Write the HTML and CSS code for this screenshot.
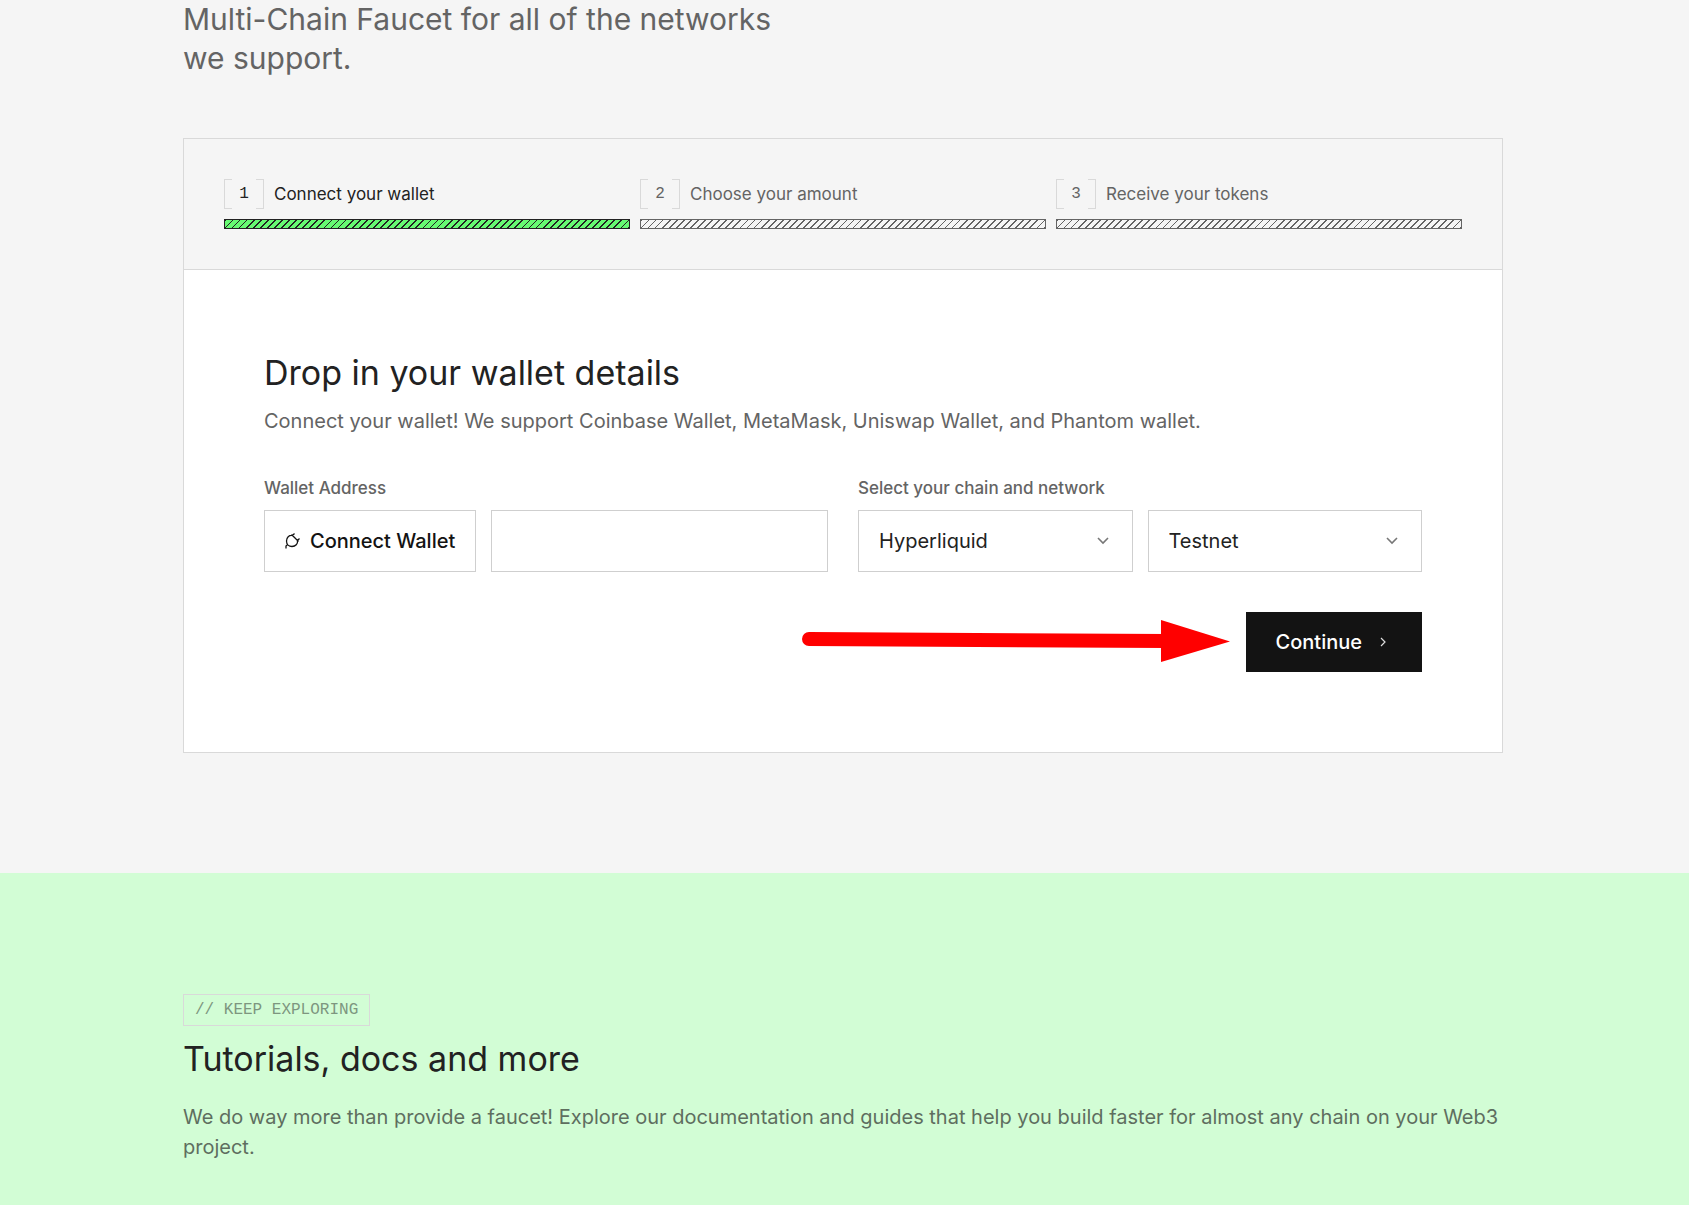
FILE: index.html
```html
<!DOCTYPE html>
<html lang="en">
<head>
<meta charset="utf-8">
<meta name="viewport" content="width=device-width, initial-scale=1">
<title>Multi-Chain Faucet</title>
<link rel="stylesheet" href="styles.css">
</head>
<body>
<main class="faucet">
  <div class="container">
    <p class="intro">Multi-Chain Faucet for all of the networks we support.</p>
    <section class="card">
      <ol class="steps">
        <li class="step step-active">
          <div class="step-head"><span class="step-number">1</span><span>Connect your wallet</span></div>
          <div class="step-bar"></div>
        </li>
        <li class="step">
          <div class="step-head"><span class="step-number">2</span><span>Choose your amount</span></div>
          <div class="step-bar"></div>
        </li>
        <li class="step">
          <div class="step-head"><span class="step-number">3</span><span>Receive your tokens</span></div>
          <div class="step-bar"></div>
        </li>
      </ol>
      <form class="form">
        <h2 class="title">Drop in your wallet details</h2>
        <p class="lead">Connect your wallet! We support Coinbase Wallet, MetaMask, Uniswap Wallet, and Phantom wallet.</p>
        <div class="fields">
          <div class="field">
            <label class="label" for="address">Wallet Address</label>
            <div class="field-row">
              <button class="connect" type="button">
                <svg class="plug" viewBox="0 0 16 16" aria-hidden="true"><path d="M7.500 1.500L14.500 8.500M8.500 2.500C5 2 2.500 4.500 2.500 8C2.500 11.500 5 13.500 8 13.500C11.500 13.500 14 11 13.500 7.500M8.500 2.500L10.500 .5M13.500 7.500L15.500 5.500M3.500 11.500L2 13V15.500"/></svg>
                Connect Wallet
              </button>
              <input class="control address" id="address" type="text">
            </div>
          </div>
          <div class="field">
            <label class="label" for="chain">Select your chain and network</label>
            <div class="field-row">
              <div class="picker">
                <select class="control" id="chain"><option>Hyperliquid</option></select>
                <svg class="chevron" viewBox="0 0 12 8" aria-hidden="true"><path d="M1 1l5 5 5-5"/></svg>
              </div>
              <div class="picker">
                <select class="control" aria-label="Network"><option>Testnet</option></select>
                <svg class="chevron" viewBox="0 0 12 8" aria-hidden="true"><path d="M1 1l5 5 5-5"/></svg>
              </div>
            </div>
          </div>
        </div>
        <div class="actions">
          <svg class="pointer" viewBox="0 0 428 42" aria-hidden="true"><path class="shaft" d="M7 19L365 21"/><path class="head" d="M359 0L428 21.500L359 42Z"/></svg>
          <button class="continue" type="button">Continue
            <svg class="next" viewBox="0 0 6 10" aria-hidden="true"><path d="M1 1l4 4-4 4"/></svg>
          </button>
        </div>
      </form>
    </section>
  </div>
</main>
<section class="explore">
  <div class="container">
    <p class="badge">// KEEP EXPLORING</p>
    <h2 class="title">Tutorials, docs and more</h2>
    <p class="lead">We do way more than provide a faucet! Explore our documentation and guides that help you build faster for almost any chain on your Web3 project.</p>
  </div>
</section>
</body>
</html>
```
FILE: styles.css
```css
* { box-sizing: border-box; }

body {
  display: flex;
  flex-direction: column;
  min-height: 100vh;
  margin: 0;
  background: #f5f5f5;
  color: #222;
  font-family: Inter, "Liberation Sans", sans-serif;
  font-size: 20px;
  line-height: 30px;
}

h2, p, ol { margin: 0; padding: 0; }

button, input, select { font: inherit; color: inherit; border-radius: 0; }

svg { fill: none; stroke: currentColor; }

.faucet { padding: 0 3px 120px 0; }

.container { max-width: 1320px; margin: 0 auto; }

.intro {
  max-width: 600px;
  padding-bottom: 60px;
  color: #646464;
  font-size: 30px;
  line-height: 39px;
}

.card { border: 1px solid #d9d9d9; background: #fff; }

.steps {
  display: grid;
  grid-template-columns: repeat(3, 1fr);
  gap: 10px;
  padding: 40px;
  border-bottom: 1px solid #d9d9d9;
  background: #f5f5f5;
  list-style: none;
}

.step { color: #646464; }
.step-active { color: #222; }

.step-head {
  display: flex;
  align-items: center;
  gap: 10px;
  margin-bottom: 10px;
  font-size: 17px;
}

.step-number {
  width: 40px;
  height: 30px;
  background:
    linear-gradient(#d9d9d9, #d9d9d9) 0 0 / 1px 100%,
    linear-gradient(#d9d9d9, #d9d9d9) 100% 0 / 1px 100%,
    linear-gradient(#d9d9d9, #d9d9d9) 0 0 / 8px 1px,
    linear-gradient(#d9d9d9, #d9d9d9) 0 100% / 8px 1px,
    linear-gradient(#d9d9d9, #d9d9d9) 100% 0 / 8px 1px,
    linear-gradient(#d9d9d9, #d9d9d9) 100% 100% / 8px 1px;
  background-repeat: no-repeat;
  font-family: "Liberation Mono", monospace;
  font-size: 16px;
  text-align: center;
}

.step-bar {
  height: 10px;
  border: 1px solid currentColor;
  background: repeating-linear-gradient(135deg, currentColor 0 calc(5px / 4), transparent calc(5px / 4) 5px);
}

.step-active .step-bar { background-color: #66fa72; }

.form { padding: 80px; }

.title {
  margin-bottom: 10px;
  font-size: 34px;
  font-weight: 400;
  line-height: 46px;
}

.lead { color: #646464; }

.form .lead { margin-bottom: 40px; }

.fields { display: grid; grid-template-columns: 1fr 1fr; gap: 30px; }

.label {
  display: block;
  margin-bottom: 10px;
  color: #646464;
  font-size: 17px;
  font-weight: 500;
  line-height: 24px;
}

.field-row { display: flex; gap: 15px; }

.control, .connect {
  height: 62px;
  padding: 0 20px;
  border: 1px solid #cfcfcf;
  background: #fff;
}

.connect {
  display: flex;
  flex: none;
  align-items: center;
  gap: 10px;
  padding: 0 20px 0 19px;
  color: #131313;
  font-weight: 500;
}

.plug { width: 16px; height: 16px; stroke-width: 1.3; }

.address { flex: 1; min-width: 0; }

.picker { position: relative; flex: 1; }
.picker .control { width: 100%; appearance: none; }

.chevron {
  position: absolute;
  top: 27px;
  right: 24px;
  width: 12px;
  height: 8px;
  color: #777;
  stroke-width: 1.6;
  pointer-events: none;
}

.actions {
  position: relative;
  display: flex;
  justify-content: flex-end;
  margin-top: 40px;
}

.pointer {
  position: absolute;
  top: 8px;
  right: 192px;
  width: 428px;
  height: 42px;
}
.shaft { stroke: #f00; stroke-width: 14; stroke-linecap: round; }
.head { fill: #f00; stroke: none; }

.continue {
  display: flex;
  align-items: center;
  gap: 18px;
  height: 60px;
  padding: 0 36px 0 30px;
  border: 0;
  background: #131313;
  color: #fff;
  font-weight: 500;
}
.next { width: 6px; height: 10px; color: #ddd; stroke-width: 1.2; }

.explore { flex: 1; padding: 121px 3px 40px 0; background: #d2fdd5; }

.badge {
  width: max-content;
  margin-bottom: 10px;
  padding: 0 11px;
  border: 1px solid #d9d9d9;
  color: #7d967f;
  font-family: "Liberation Mono", monospace;
  font-size: 16px;
}

.explore .title { margin-bottom: 20px; }
.explore .lead { color: #5e6e5f; }
```
